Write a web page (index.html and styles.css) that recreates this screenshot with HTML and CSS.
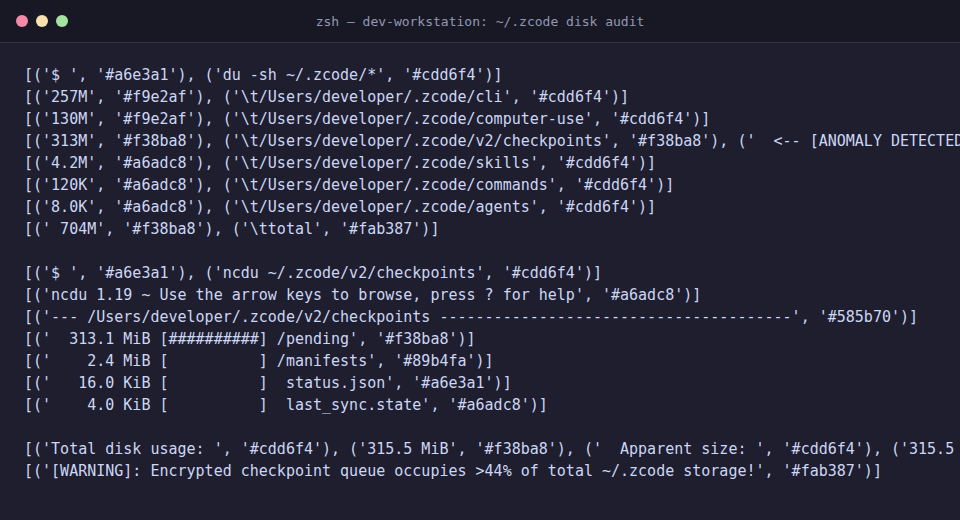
FILE: index.html
```html
<!DOCTYPE html>
<html>
<head>
<meta charset="utf-8">
<link rel="stylesheet" href="styles.css">
</head>
<body>
<div class="window">
  <header class="titlebar">
    <div class="lights">
      <span class="light red"></span>
      <span class="light yellow"></span>
      <span class="light green"></span>
    </div>
    <div class="title">zsh — dev-workstation: ~/.zcode disk audit</div>
  </header>
  <main class="term"><div class="line">[('$ ', '#a6e3a1'), ('du -sh ~/.zcode/*', '#cdd6f4')]</div><div class="line">[('257M', '#f9e2af'), ('\t/Users/developer/.zcode/cli', '#cdd6f4')]</div><div class="line">[('130M', '#f9e2af'), ('\t/Users/developer/.zcode/computer-use', '#cdd6f4')]</div><div class="line">[('313M', '#f38ba8'), ('\t/Users/developer/.zcode/v2/checkpoints', '#f38ba8'), ('  &lt;-- [ANOMALY DETECTED]', '#f38ba8')]</div><div class="line">[('4.2M', '#a6adc8'), ('\t/Users/developer/.zcode/skills', '#cdd6f4')]</div><div class="line">[('120K', '#a6adc8'), ('\t/Users/developer/.zcode/commands', '#cdd6f4')]</div><div class="line">[('8.0K', '#a6adc8'), ('\t/Users/developer/.zcode/agents', '#cdd6f4')]</div><div class="line">[(' 704M', '#f38ba8'), ('\ttotal', '#fab387')]</div><div class="line"> </div><div class="line">[('$ ', '#a6e3a1'), ('ncdu ~/.zcode/v2/checkpoints', '#cdd6f4')]</div><div class="line">[('ncdu 1.19 ~ Use the arrow keys to browse, press ? for help', '#a6adc8')]</div><div class="line">[('--- /Users/developer/.zcode/v2/checkpoints ---------------------------------------', '#585b70')]</div><div class="line">[('  313.1 MiB [##########] /pending', '#f38ba8')]</div><div class="line">[('    2.4 MiB [          ] /manifests', '#89b4fa')]</div><div class="line">[('   16.0 KiB [          ]  status.json', '#a6e3a1')]</div><div class="line">[('    4.0 KiB [          ]  last_sync.state', '#a6adc8')]</div><div class="line"> </div><div class="line">[('Total disk usage: ', '#cdd6f4'), ('315.5 MiB', '#f38ba8'), ('  Apparent size: ', '#cdd6f4'), ('315.5 MiB', '#f38ba8')]</div><div class="line">[('[WARNING]: Encrypted checkpoint queue occupies &gt;44% of total ~/.zcode storage!', '#fab387')]</div></main>
</div>
</body>
</html>
```
FILE: styles.css
```css
html, body {
  margin: 0;
  padding: 0;
  background: #1e1e2e;
}
.window {
  width: 960px;
  height: 520px;
  display: flex;
  flex-direction: column;
  background: #1e1e2e;
  overflow: hidden;
}
.titlebar {
  height: 42px;
  flex: 0 0 42px;
  background: #181825;
  border-bottom: 1px solid #313244;
  display: flex;
  align-items: center;
  position: relative;
}
.lights {
  display: flex;
  gap: 8px;
  padding-left: 16px;
}
.light {
  width: 12px;
  height: 12px;
  border-radius: 50%;
  display: block;
}
.red { background: #f38ba8; }
.yellow { background: #f9e2af; }
.green { background: #a6e3a1; }
.title {
  position: absolute;
  left: 0;
  right: 0;
  top: 0;
  bottom: 0;
  display: flex;
  align-items: center;
  justify-content: center;
  font-family: "DejaVu Sans Mono", monospace;
  font-size: 13px;
  color: #9399b2;
  pointer-events: none;
}
.term {
  flex: 1;
  padding: 21px 0 0 24px;
  font-family: "DejaVu Sans Mono", monospace;
  font-size: 15px;
  line-height: 22px;
  color: #cdd6f4;
  overflow: hidden;
}
.line {
  white-space: pre;
  height: 22px;
}
```
